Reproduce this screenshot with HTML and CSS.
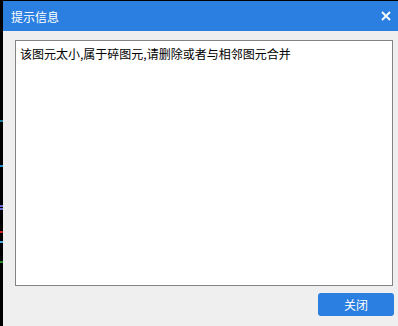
FILE: index.html
```html
<!DOCTYPE html>
<html lang="zh">
<head>
    <meta charset="UTF-8">
    <title>提示信息</title>
    <link rel="stylesheet" href="styles.css">
</head>
<body>
    <div class="screen">
        <div class="backdrop"></div>
        <div class="dialog">
            <div class="dialog-title">
                <span>提示信息</span>
                <svg class="close" width="10" height="10" viewBox="0 0 10 10">
                    <path d="M1 1L9 9M9 1L1 9" stroke="#fff" stroke-width="1.8" fill="none"/>
                </svg>
            </div>
            <div class="dialog-body">
                <div class="message">该图元太小,属于碎图元,请删除或者与相邻图元合并</div>
                <div class="actions">
                    <button type="button" class="btn">关闭</button>
                </div>
            </div>
        </div>
    </div>
</body>
</html>
```

FILE: styles.css
```css
body {
    margin: 0;
    padding: 0;
    font-family: "Microsoft YaHei", "Noto Sans CJK SC", sans-serif;
    background: #000;
}
.screen {
    display: flex;
    width: 398px;
    height: 326px;
    overflow: hidden;
}
.backdrop {
    width: 3px;
    flex: none;
    background:
        linear-gradient(#000 0 120px, #1a7f9c 120px 122px, #000 122px 165px, #1d8fd0 165px 167px,
            #000 167px 205px, #6c6cd8 205px 207px, #000 207px 208px, #6c6cd8 208px 210px,
            #000 210px 231px, #d02020 231px 233px, #000 233px 241px, #4aa8e0 241px 243px,
            #000 243px 261px, #1d8a2a 261px 263px, #000 263px);
}
.dialog {
    flex: 1;
    margin-top: 1px;
    display: flex;
    flex-direction: column;
    background: #efefef;
}
.dialog-title {
    height: 30px;
    background: #2b7fe0;
    color: #fff;
    font-size: 12px;
    display: flex;
    align-items: center;
    justify-content: space-between;
    padding: 0 7px 0 8px;
}
.close {
    display: block;
}
.dialog-body {
    flex: 1;
    display: flex;
    flex-direction: column;
    padding: 9px 5px 0 12px;
}
.message {
    height: 236px;
    border: 1px solid #838383;
    background: #fff;
    padding: 4px 4px;
    font-size: 12px;
    line-height: 18px;
    color: #000;
}
.actions {
    display: flex;
    justify-content: flex-end;
    padding-top: 7px;
}
.btn {
    width: 76px;
    height: 23px;
    border: none;
    border-radius: 3px;
    background: #2b7fe0;
    color: #fff;
    font-size: 12px;
    font-family: inherit;
    padding: 0;
    margin-right: -1px;
}
```
